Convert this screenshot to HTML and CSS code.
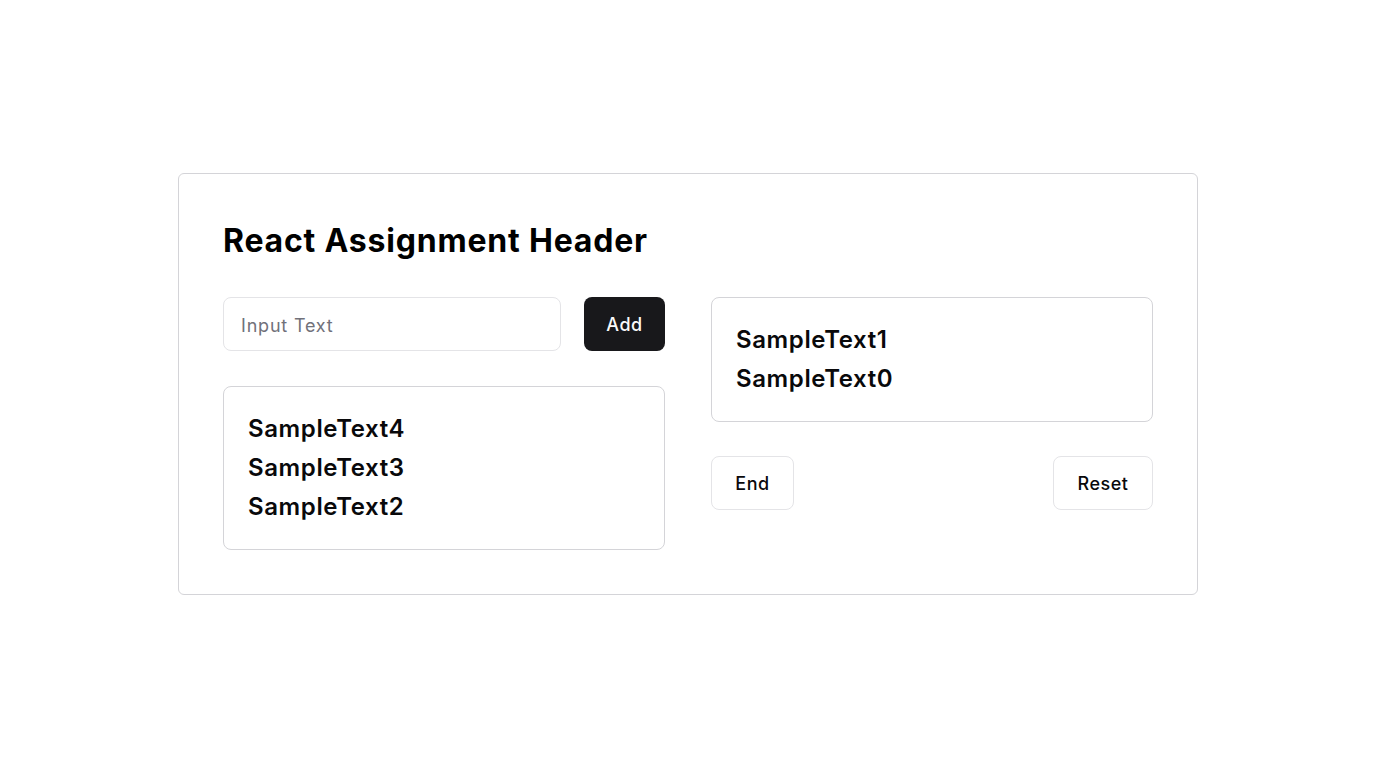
FILE: index.html
```html
<!DOCTYPE html>
<html lang="en">
<head>
<meta charset="utf-8">
<title>React Assignment</title>
<link rel="stylesheet" href="styles.css">
</head>
<body>
<main class="card">
  <h1 class="title">React Assignment Header</h1>
  <div class="columns">
    <section class="col">
      <div class="input-row">
        <input class="text-input" type="text" placeholder="Input Text">
        <button class="btn btn-dark">Add</button>
      </div>
      <div class="list-box list-left">
        <div class="item">SampleText4</div>
        <div class="item">SampleText3</div>
        <div class="item">SampleText2</div>
      </div>
    </section>
    <section class="col">
      <div class="list-box">
        <div class="item">SampleText1</div>
        <div class="item">SampleText0</div>
      </div>
      <div class="actions">
        <button class="btn btn-outline btn-end">End</button>
        <button class="btn btn-outline btn-reset">Reset</button>
      </div>
    </section>
  </div>
</main>
</body>
</html>
```

FILE: styles.css
```css
* { box-sizing: border-box; }
html, body { margin: 0; padding: 0; }
body {
  min-height: 100vh;
  display: flex;
  align-items: center;
  justify-content: center;
  background: #ffffff;
  font-family: Inter, "Noto Sans", sans-serif;
  color: #09090b;
}
.card {
  width: 1020px;
  height: 422px;
  border: 1px solid #d4d4d8;
  border-radius: 6px;
  padding: 43px 44px 44px;
  background: #fff;
}
.title {
  margin: 0 0 32px 0;
  font-size: 32px;
  line-height: 48px;
  font-weight: 700;
  letter-spacing: 0.8px;
  color: #000;
}
.columns {
  display: grid;
  grid-template-columns: 1fr 1fr;
  column-gap: 46px;
}
.col { display: flex; flex-direction: column; }
.input-row {
  display: flex;
  gap: 23px;
  height: 54px;
}
.text-input {
  flex: 1;
  height: 54px;
  border: 1px solid #e4e4e7;
  border-radius: 8px;
  padding: 2px 17px 0;
  font-family: inherit;
  font-size: 18px;
  letter-spacing: 0.8px;
  color: #09090b;
  outline: none;
}
.text-input::placeholder { color: #71717a; }
.btn {
  height: 54px;
  border-radius: 8px;
  font-family: inherit;
  font-size: 18px;
  font-weight: 500;
  letter-spacing: 0.5px;
  cursor: pointer;
}
.btn-dark {
  width: 81px;
  background: #18181b;
  color: #fafafa;
  border: none;
}
.btn-outline {
  background: #fff;
  color: #09090b;
  border: 1px solid #e4e4e7;
}
.btn-end { width: 83px; }
.btn-reset { width: 100px; }
.list-box {
  border: 1px solid #d4d4d8;
  border-radius: 8px;
  padding: 22px 24px 23px;
}
.list-left { margin-top: 35px; }
.item {
  font-size: 24px;
  line-height: 39px;
  font-weight: 600;
  letter-spacing: 0.6px;
  color: #09090b;
}
.actions {
  margin-top: 34px;
  display: flex;
  justify-content: space-between;
}
```
